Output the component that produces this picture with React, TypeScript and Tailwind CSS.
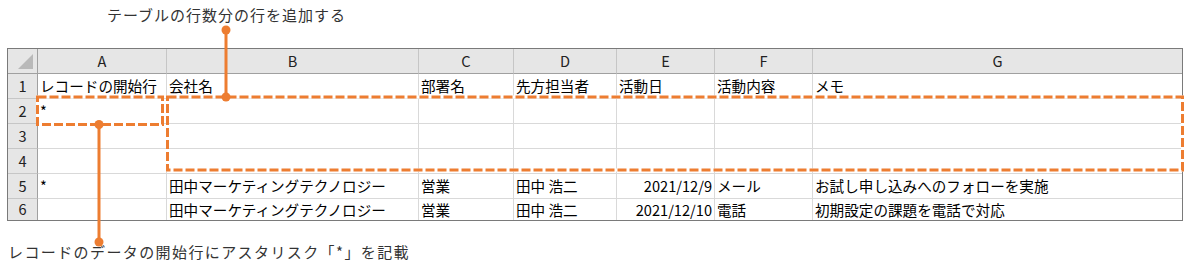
import React from 'react'

const cols = ['A', 'B', 'C', 'D', 'E', 'F', 'G']

const rows: string[][] = [
  ['レコードの開始行', '会社名', '部署名', '先方担当者', '活動日', '活動内容', 'メモ'],
  ['*', '', '', '', '', '', ''],
  ['', '', '', '', '', '', ''],
  ['', '', '', '', '', '', ''],
  ['*', '田中マーケティングテクノロジー', '営業', '田中 浩二', '2021/12/9', 'メール', 'お試し申し込みへのフォローを実施'],
  ['', '田中マーケティングテクノロジー', '営業', '田中 浩二', '2021/12/10', '電話', '初期設定の課題を電話で対応'],
]

// 活動日 (E) の日付は右寄せ
const isNumber = (v: string) => /^\d{4}\/\d+\/\d+$/.test(v)

function DashedBox({ x, y, w, h }: { x: number; y: number; w: number; h: number }) {
  return (
    <g>
      <rect x={x} y={y} width={w} height={h} fill="none" stroke="#ffffff" strokeWidth={3} />
      <rect x={x} y={y} width={w} height={h} fill="none" stroke="#ED7D31" strokeWidth={3} strokeDasharray="9 3" />
    </g>
  )
}

export default function App() {
  return (
    <div className="relative h-[268px] w-[1188px] overflow-hidden bg-white font-['Noto_Sans_CJK_JP',sans-serif] text-black">
      {/* 上の注釈 */}
      <div className="h-[48px] pl-[107px] pt-[5px] text-[15px] leading-[20px] tracking-[1px] text-[#333]">
        テーブルの行数分の行を追加する
      </div>

      {/* シート */}
      <div className="ml-[7px] grid w-fit grid-cols-[30px_129px_252px_95px_103px_98px_98px_369px] grid-rows-[25px_25px_25px_25px_25px_25px_21px] border border-[#7a7a7a] text-[14.6px] leading-none">
        <div className="relative border-b border-r border-b-[#a0a0a0] border-r-[#a0a0a0] bg-[#e6e6e6]">
          <svg className="absolute right-[4px] bottom-[4px]" width="15" height="15" viewBox="0 0 15 15">
            <polygon points="15,0 15,15 0,15" fill="#b9b9b9" />
          </svg>
        </div>
        {cols.map((c, i) => (
          <div
            key={c}
            className={`flex items-center justify-center border-b border-b-[#a0a0a0] bg-[#e6e6e6] text-[#222] ${i < cols.length - 1 ? 'border-r border-r-[#c6c6c6]' : ''}`}
          >
            {c}
          </div>
        ))}

        {rows.map((r, ri) => {
          const last = ri === rows.length - 1
          return (
            <React.Fragment key={ri}>
              <div
                className={`flex items-center justify-center border-r border-r-[#a0a0a0] bg-[#e6e6e6] text-[#222] ${last ? '' : 'border-b border-b-[#c6c6c6]'}`}
              >
                {ri + 1}
              </div>
              {r.map((v, ci) => (
                <div
                  key={ci}
                  className={`flex items-center overflow-hidden whitespace-nowrap pt-[1px] ${isNumber(v) ? 'justify-end pr-[2px]' : 'pl-[2px]'} ${last ? '' : 'border-b border-b-[#d9d9d9]'} ${ci < r.length - 1 ? 'border-r border-r-[#d9d9d9]' : ''}`}
                >
                  {v}
                </div>
              ))}
            </React.Fragment>
          )
        })}
      </div>

      {/* 下の注釈 */}
      <div className="mt-[21px] pl-[8px] text-[15px] leading-[20px] tracking-[1.4px] text-[#333]">
        レコードのデータの開始行にアスタリスク「*」を記載
      </div>

      {/* 枠線と引き出し線 */}
      <svg className="pointer-events-none absolute inset-0" width="1188" height="268" viewBox="0 0 1188 268">
        <DashedBox x={37.5} y={97} w={125} h={27.5} />
        <DashedBox x={167.5} y={97} w={1015} h={73} />
        <line x1={226} y1={30} x2={226} y2={97} stroke="#ED7D31" strokeWidth={3} />
        <circle cx={226} cy={30} r={4.5} fill="#ED7D31" />
        <circle cx={226} cy={97} r={4.5} fill="#ED7D31" />
        <line x1={99} y1={124.5} x2={99} y2={242} stroke="#ED7D31" strokeWidth={3} />
        <circle cx={99} cy={124.5} r={4.5} fill="#ED7D31" />
        <circle cx={99} cy={242} r={4.5} fill="#ED7D31" />
      </svg>
    </div>
  )
}
